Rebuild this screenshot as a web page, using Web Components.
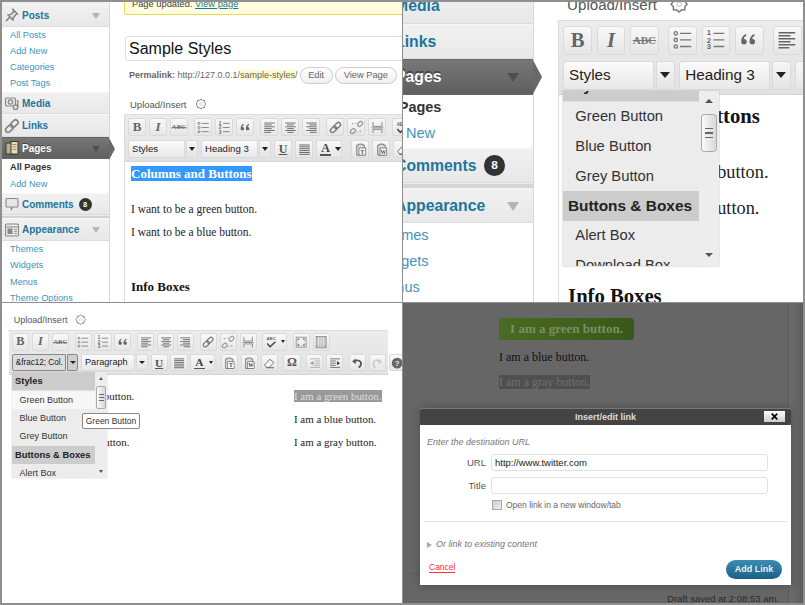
<!DOCTYPE html>
<html lang="en">
<head>
<meta charset="utf-8">
<title>Sample Styles</title>
<style>
  html,body{margin:0;padding:0;background:#8f8f8f;}
  body{width:805px;height:605px;overflow:hidden;font-family:"Liberation Sans",Arial,sans-serif;}
  #p2menu{zoom:1.575;margin:-98.300px 0 0 -25px;}
  #p2main{zoom:1.59;margin-left:15px;--pt:6px;}
  #p3main{zoom:.95;margin:0 0 0 6.400px;}
  #p3main wp-editor{border-left:0;padding-left:1px;}
  #dd2{position:absolute;left:160px;top:89px;zoom:1;--dz:1.64;--dh:106.500px;--crop:-12px;}
  #dd3{position:absolute;left:10px;top:69px;--dz:1;--dh:106px;--crop:0px;}
  #tip{position:absolute;left:80px;top:110px;}
  #dlg{position:absolute;left:17px;top:105px;}
</style>
</head>
<body>
<wp-collage>
  <wp-panel>
    <wp-menu></wp-menu>
    <wp-main>
      <wp-notice>Page updated. <a>View page</a></wp-notice>
      <wp-title>Sample Styles</wp-title>
      <wp-permalink></wp-permalink>
      <wp-upload></wp-upload>
      <wp-editor>
        <wp-toolbar slot="tb" row="b i abc | ul ol quote | al ac ar | link unlink more | spell"></wp-toolbar>
        <wp-toolbar slot="tb" row="sel:Styles sel:Heading_3 u just a+ | | pt pw eraser"></wp-toolbar>
        <wp-doc heading="sel"></wp-doc>
      </wp-editor>
    </wp-main>
  </wp-panel>

  <wp-panel>
    <wp-menu id="p2menu"></wp-menu>
    <wp-main id="p2main">
      <wp-upload style="margin-top:-5.500px"></wp-upload>
      <wp-editor>
        <wp-toolbar slot="tb" row="b i abc | ul ol quote | al ac ar"></wp-toolbar>
        <wp-toolbar slot="tb" row="sel:Styles sel:Heading_3 u just"></wp-toolbar>
        <wp-doc></wp-doc>
      </wp-editor>
    </wp-main>
    <wp-dropdown id="dd2"></wp-dropdown>
  </wp-panel>

  <wp-panel>
    <wp-main id="p3main">
      <wp-upload style="margin-top:11px"></wp-upload>
      <wp-editor>
        <wp-toolbar slot="tb" row="b i abc | ul ol quote | al ac ar | link unlink more | spell+ | full sink"></wp-toolbar>
        <wp-toolbar slot="tb" row="sel!:&amp;frac12;_Col. sel:Paragraph u just a+ | pt pw eraser | omega | out ind | undo redo help"></wp-toolbar>
        <wp-cols></wp-cols>
      </wp-editor>
    </wp-main>
    <wp-dropdown id="dd3" active></wp-dropdown>
    <wp-tip id="tip">Green Button</wp-tip>
  </wp-panel>

  <wp-panel>
    <wp-dimmed></wp-dimmed>
    <wp-link-dialog id="dlg"></wp-link-dialog>
  </wp-panel>
</wp-collage>

<script>
const G = '#777';
const esc = s => s.replace(/&/g,'&amp;').replace(/</g,'&lt;');
const lines = (rows) => rows.map(([a,b,y]) => `<path d="M${a} ${y}H${b}"/>`).join('');
const ICONS = {
  ul: `<g stroke="${G}" fill="none" stroke-width="1.1"><circle cx="4" cy="4.5" r="1.4"/><circle cx="4" cy="10" r="1.4"/><circle cx="4" cy="15.5" r="1.4"/><path d="M7.5 4.5H17M7.5 10H17M7.5 15.5H17"/></g>`,
  ol: `<g fill="#666" font-family="Liberation Sans" font-size="6.4" font-weight="700"><text x="2.4" y="6">1</text><text x="2.4" y="12.2">2</text><text x="2.4" y="18">3</text></g><path d="M8 4.5H17M8 10H17M8 15.5H17" stroke="${G}" stroke-width="1.1" fill="none"/>`,
  quote: `<g fill="#666"><path d="M3.5 11.5c0-3.4 1.7-5.6 4.2-6.5v1.6C6.5 7.3 5.8 8.2 5.7 9.3c1.4-.2 2.5.8 2.5 2.2 0 1.3-1 2.3-2.3 2.3-1.4 0-2.4-.9-2.4-2.3z"/><path d="M10.5 11.5c0-3.4 1.7-5.6 4.2-6.5v1.6c-1.2.7-1.9 1.6-2 2.7 1.4-.2 2.5.8 2.5 2.2 0 1.3-1 2.3-2.3 2.3-1.4 0-2.4-.9-2.4-2.3z"/></g>`,
  al: `<g stroke="#666" stroke-width="1.2" fill="none">${lines([[3,17,4],[3,13,6.5],[3,17,9],[3,13,11.5],[3,17,14],[3,12,16.5]])}</g>`,
  ac: `<g stroke="#666" stroke-width="1.2" fill="none">${lines([[3,17,4],[5.5,14.5,6.5],[3,17,9],[5.5,14.5,11.5],[3,17,14],[6,14,16.5]])}</g>`,
  ar: `<g stroke="#666" stroke-width="1.2" fill="none">${lines([[3,17,4],[7,17,6.5],[3,17,9],[7,17,11.5],[3,17,14],[8,17,16.5]])}</g>`,
  just: `<g stroke="#666" stroke-width="1.3" fill="none">${lines([[3,17,4],[3,17,6.5],[3,17,9],[3,17,11.5],[3,17,14],[3,17,16.5]])}</g>`,
  link: `<g transform="rotate(-45 10 10)" fill="none" stroke="${G}" stroke-width="1.8"><rect x="1.5" y="7.2" width="9.5" height="5.6" rx="2.8"/><rect x="9" y="7.2" width="9.5" height="5.6" rx="2.8"/></g>`,
  unlink: `<g fill="none" stroke="#999" stroke-width="1.7"><g transform="rotate(-45 10 10)"><rect x="-.5" y="7.5" width="7.5" height="5" rx="2.5"/><rect x="13" y="7.5" width="7.5" height="5" rx="2.5"/></g></g><g fill="#999"><circle cx="5" cy="5" r="1"/><circle cx="15" cy="15" r="1"/><circle cx="9" cy="4" r=".8"/><circle cx="11" cy="16" r=".8"/></g>`,
  more: `<g fill="none" stroke="${G}" stroke-width="1.1"><path d="M4 2.5V8.5H16V2.5"/><path d="M2 10.5H18"/><path d="M4 17.5V12.5H16V17.5"/></g>`,
  spell: `<text x="10" y="7.5" text-anchor="middle" font-family="Liberation Sans" font-weight="700" font-size="6" fill="#666">ABC</text><path d="M4.5 12l4 4.5 7.5-7" fill="none" stroke="#444" stroke-width="2"/>`,
  full: `<rect x="3" y="3" width="14" height="14" fill="none" stroke="${G}" stroke-width="1"/><g fill="#5c7a8a"><path d="M5 5h3.5L5 8.5zM15 5h-3.5L15 8.5zM5 15h3.5L5 11.5zM15 15h-3.5L15 11.5z"/></g>`,
  sink: `<rect x="3" y="2" width="14" height="16" fill="#bbb" stroke="${G}"/><g stroke="#eee" stroke-width=".9"><path d="M3 5.5H17M3 9H17M3 12.5H17M6.5 2V18M10 2V18M13.5 2V18"/></g>`,
  pt: `<path d="M5 4h2.5V2.8h5V4H15v13.5H5z" fill="#ddd" stroke="#666" stroke-width="1.1"/><rect x="8" y="8" width="9" height="9.5" fill="#fff" stroke="#666"/><text x="12.5" y="16" text-anchor="middle" font-family="Liberation Serif" font-weight="700" font-size="8" fill="#444">T</text>`,
  pw: `<path d="M5 4h2.5V2.8h5V4H15v13.5H5z" fill="#ddd" stroke="#666" stroke-width="1.1"/><rect x="8" y="8" width="9" height="9.5" fill="#fff" stroke="#666"/><text x="12.5" y="16" text-anchor="middle" font-family="Liberation Serif" font-weight="700" font-size="7.5" fill="#444">W</text>`,
  eraser: `<path d="M3.5 12.5L11 4.5l5.5 4.5-6 7H6z" fill="#f4f4f4" stroke="#666" stroke-width="1.2"/><path d="M6 16.5H17" stroke="#666" stroke-width="1.5"/>`,
  out: `<g stroke="#aaa" stroke-width="1.2" fill="none">${lines([[3,17,4],[9,17,7],[9,17,10],[9,17,13],[3,17,16]])}</g><path d="M7.5 7v6L3 10z" fill="#999"/>`,
  ind: `<g stroke="#666" stroke-width="1.2" fill="none">${lines([[3,17,4],[3,11,7],[3,11,10],[3,11,13],[3,17,16]])}</g><path d="M12.5 7v6L17 10z" fill="#444"/>`,
  undo: `<path d="M6 7.5c5-3 10-.5 9.5 4-.3 2.3-1.8 3.8-3.5 4.5" fill="none" stroke="#555" stroke-width="2.5"/><path d="M3 7.5L8 3.5v8z" fill="#555"/>`,
  redo: `<path d="M14 7.5c-5-3-10-.5-9.5 4 .3 2.3 1.8 3.8 3.5 4.5" fill="none" stroke="#ccc" stroke-width="2.5"/><path d="M17 7.5L12 3.5v8z" fill="#ccc"/>`,
  help: `<circle cx="10" cy="10" r="7.5" fill="#666"/><text x="10" y="14" text-anchor="middle" font-family="Liberation Sans" font-weight="700" font-size="11" fill="#eee">?</text>`
};
const TEXT_TOOLS = {
  b:`<span style="font:700 13px 'Liberation Serif';color:#666">B</span>`,
  i:`<span style="font:italic 700 13px 'Liberation Serif';color:#666">I</span>`,
  abc:`<span style="font:700 7px 'Liberation Serif';color:#777;text-decoration:line-through">ABC</span>`,
  u:`<span style="font:700 12px 'Liberation Serif';color:#555;text-decoration:underline">U</span>`,
  a:`<span style="font:700 12px/11px 'Liberation Serif';color:#444;border-bottom:2px solid #555;padding:0 1px">A</span>`,
  omega:`<span style="font:700 13px 'Liberation Serif';color:#555">Ω</span>`
};

function define(name, css, html){
  customElements.define(name, class extends HTMLElement{
    constructor(){
      super();
      this.attachShadow({mode:'open'});
    }
    connectedCallback(){
      if(this.shadowRoot.childNodes.length) return;
      this.shadowRoot.innerHTML = `<style>${css}</style>${typeof html==='function'?html(this):html}`;
    }
  });
}

define('wp-collage', `:host{display:grid;grid-template-columns:400px 400px;grid-template-rows:300px 300px;gap:1px;padding:2px;width:805px;height:605px;box-sizing:border-box;background:#8f8f8f;}`, `<slot></slot>`);

define('wp-panel', `:host{display:flex;position:relative;overflow:hidden;background:#fff;width:400px;height:300px;font-family:"Liberation Sans",sans-serif;}`, `<slot></slot>`);

define('wp-main', `:host{display:block;flex:none;width:400px;margin-left:14px;}`, `<slot></slot>`);

define('wp-notice', `:host{display:block;margin-top:-8px;height:21px;box-sizing:border-box;background:#ffffe0;border:1px solid #e6db55;border-radius:2px;padding:4px 0 0 7px;font-size:9.3px;color:#444;line-height:11px;white-space:nowrap;}
  ::slotted(a){color:#21759b;text-decoration:underline;}`, `<slot></slot>`);

define('wp-title', `:host{display:block;margin:21px 0 0 1px;height:25px;width:330px;box-sizing:border-box;border:1px solid #dfdfdf;border-radius:3px;padding:0 3px;font-size:16px;line-height:23px;color:#111;}`, `<slot></slot>`);

define('wp-permalink', `:host{display:flex;align-items:center;gap:2px;margin:6px 0 0 5px;height:16px;font-size:9px;color:#666;white-space:nowrap;}
  mark{background:#fffbcc;color:#666;}
  b{font-weight:700;}
  span.btn{display:inline-block;height:17px;line-height:15px;box-sizing:border-box;border:1px solid #ccc;border-radius:9px;padding:0 7.5px;background:linear-gradient(#fff,#f0f0f0);font-size:9.3px;color:#666;}`,
  `<span><b>Permalink:</b> http://127.0.0.1/<mark>sample-styles</mark>/</span><span class="btn">Edit</span><span class="btn" style="padding:0 8px">View Page</span>`);

const star = (() => { let p=''; for(let i=0;i<16;i++){const a=i*Math.PI/8, r=i%2?5.7:7.2; p+=(10+r*Math.cos(a)).toFixed(2)+','+(10+r*Math.sin(a)).toFixed(2)+' ';} return p; })();
define('wp-upload', `:host{display:flex;align-items:center;height:17px;box-sizing:border-box;padding:0 0 3px 6px;margin-top:14px;font-size:9.5px;color:#555;white-space:nowrap;}
  svg{width:14px;height:14px;margin-left:7px;flex:none;}`,
  `<span>Upload/Insert</span><svg viewBox="0 0 20 20" aria-hidden="true"><polygon points="${star}" fill="none" stroke="#777" stroke-width="1.3"/><circle cx="10" cy="10" r="2" fill="none" stroke="#ccc"/></svg>`);

define('wp-editor', `:host{display:block;width:400px;border:1px solid #dcdcdc;border-width:1px 0 0 1px;box-sizing:border-box;background:#fff;}
  .bars{display:flex;flex-direction:column;gap:4px;padding:3px;background:linear-gradient(#ececec,#e2e2e2);border-bottom:1px solid #d5d5d5;}`,
  `<div class="bars"><slot name="tb"></slot></div><slot></slot>`);

define('wp-tool', `:host{display:inline-flex;align-items:center;justify-content:center;flex:none;width:18px;height:18px;box-sizing:border-box;border:1px solid #dadada;border-radius:2px;background:linear-gradient(#f8f8f8,#e6e6e6);overflow:hidden;}
  :host([split]){width:26px;justify-content:flex-start;padding-left:1px;}
  svg{width:15px;height:15px;flex:none;}
  .inner{display:inline-flex;align-items:center;justify-content:center;width:15px;flex:none;line-height:1;}
  i{display:block;flex:none;margin-left:2px;width:0;height:0;border:3px solid transparent;border-top:4px solid #222;border-bottom:0;}`,
  (el)=>{
    const name = el.getAttribute('name');
    const arrow = el.hasAttribute('split') ? '<i></i>' : '';
    if (TEXT_TOOLS[name]) return `<span class="inner">${TEXT_TOOLS[name]}</span>${arrow}`;
    return `<svg viewBox="0 0 20 20" aria-hidden="true">${ICONS[name]||''}</svg>${arrow}`;
  });

define('wp-select', `:host{display:flex;flex:none;width:70px;height:18px;gap:1px;font-size:9.6px;color:#222;}
  .lab{flex:1;min-width:0;box-sizing:border-box;border:1px solid #dadada;border-radius:2px 0 0 2px;background:linear-gradient(#fbfbfb,#e8e8e8);line-height:16px;padding-left:3px;white-space:nowrap;overflow:hidden;}
  .arr{flex:none;width:12px;box-sizing:border-box;border:1px solid #dadada;border-radius:0 2px 2px 0;background:linear-gradient(#f6f6f6,#e4e4e4);display:flex;align-items:center;justify-content:center;}
  i{display:block;width:0;height:0;border:3.5px solid transparent;border-top:4px solid #222;border-bottom:0;}
  :host([open]){font-size:8.6px;}
  :host([open]) .lab{border-color:#888;background:#dcdcdc;}
  :host([open]) .arr{border-color:#888;background:#cfcfcf;}`,
  (el)=>`<div class="lab">${esc(el.getAttribute('label'))}</div><div class="arr"><i></i></div>`);

define('wp-toolbar', `:host{display:flex;align-items:center;gap:3px;height:18px;white-space:nowrap;}
  .sp{display:block;flex:none;width:0;height:1px;}
  wp-select:first-child{margin-left:1px;}`,
  (el)=>el.getAttribute('row').split(' ').map(t=>{
    if(t==='|') return '<span class="sp"></span>';
    if(t.startsWith('sel:')) return `<wp-select label="${t.slice(4).replace(/_/g,' ')}"></wp-select>`;
    if(t.startsWith('sel!:')) return `<wp-select open label="${esc(t.slice(5).replace(/_/g,' '))}"></wp-select>`;
    if(t.endsWith('+')) return `<wp-tool name="${t.slice(0,-1)}" split></wp-tool>`;
    return `<wp-tool name="${t}"></wp-tool>`;
  }).join(''));

define('wp-doc', `:host{display:block;font-family:"Liberation Serif",serif;font-size:11.5px;color:#222;padding:var(--pt,4.5px) 0 0 6px;height:200px;background:#fff;}
  p{margin:0;line-height:14px;white-space:nowrap;}
  h3{margin:0;font-size:13px;line-height:14px;font-weight:700;color:#111;white-space:nowrap;}
  h3 span.sel{background:#39f;color:#fff;}`, (el)=>`
  <h3>${el.getAttribute('heading')?'<span class="sel">Columns and Buttons</span>':'Columns and Buttons'}</h3>
  <p style="margin-top:21px">I want to be a green button.</p>
  <p style="margin-top:9px">I want to be a blue button.</p>
  <h3 style="margin-top:41px">Info Boxes</h3>`);

define('wp-cols', `:host{display:grid;grid-template-columns:294px 1fr;row-gap:10.5px;padding:15px 0 0 6px;height:200px;font-family:"Liberation Serif",serif;font-size:11.5px;color:#222;align-content:start;background:#fff;}
  p{margin:0;line-height:14px;white-space:nowrap;}
  .sel{background:#999;color:#ddd;}`,
  `<p>I want to be a green button.</p><p><span class="sel">I am a green button.</span></p>
   <p>I want to be a blue button.</p><p>I am a blue button.</p>
   <p>I want to be a gray button.</p><p>I am a gray button.</p>`);

const MICONS = {
  pin:`<g fill="none" stroke="#777" stroke-width="1.2"><path d="M9 2.5l4.5 4.5-1.5.5-2.5 3-.5 2.5-5-5 2.5-.5 3-2.5z" fill="#ddd"/><path d="M5.5 10.5L2 14" stroke-width="1.5"/></g>`,
  media:`<g fill="none" stroke="#888" stroke-width="1.2"><rect x="1.5" y="3" width="10" height="8" rx="1" fill="#e4e4e4"/><circle cx="6.5" cy="7" r="2.2"/><circle cx="11.5" cy="12.2" r="2.3" fill="#ddd"/><path d="M13.8 12V5" stroke="#777"/></g>`,
  links:`<g transform="rotate(-45 8 8)" fill="none" stroke="#888" stroke-width="1.8"><rect x="0" y="5.5" width="8.5" height="5" rx="2.5"/><rect x="7" y="5.5" width="8.5" height="5" rx="2.5"/></g>`,
  pages:`<rect x="2" y="3" width="6.5" height="11" fill="#b9b08c" stroke="#3d3a2c"/><rect x="7" y="1.5" width="7" height="12.5" fill="#eadfb6" stroke="#3d3a2c"/><path d="M8.5 4.5h4M8.5 7h4M8.5 9.5h4" stroke="#9a8f6a"/>`,
  comments:`<path d="M3 2.5h10a1 1 0 0 1 1 1v6.5a1 1 0 0 1-1 1H8.5l-1 2.5-.8-2.5H3a1 1 0 0 1-1-1V3.5a1 1 0 0 1 1-1z" fill="#e6e6e6" stroke="#888" stroke-width="1.1"/>`,
  appearance:`<rect x="1.5" y="2" width="13" height="12" rx="1" fill="#e8e8e8" stroke="#888" stroke-width="1.1"/><path d="M1.5 5H14.5" stroke="#888"/><rect x="3.5" y="6.5" width="5" height="5.5" fill="#888"/><path d="M10 7.5h3M10 9.5h3M10 11.5h3" stroke="#999"/>`
};
define('wp-menu-group', `:host{display:block;}
  .h{position:relative;display:flex;align-items:center;height:22.5px;box-sizing:border-box;background:linear-gradient(#f1f1f1,#e8e8e8);border-top:1px solid #f7f7f7;border-bottom:1px solid #dcdcdc;font-weight:700;font-size:10px;color:#21759b;white-space:nowrap;}
  .ic{width:16px;height:16px;flex:none;margin:0 2px;}
  .tri{position:absolute;right:9px;top:8px;width:0;height:0;border:4px solid transparent;border-top:6px solid #b4b4b4;border-bottom:0;}
  .badge{display:inline-block;margin-left:5px;width:13px;height:13px;border-radius:50%;background:#333;color:#fff;text-align:center;font-size:7.5px;line-height:13px;font-weight:700;}
  :host([current]) .h{background:linear-gradient(#777,#5f5f5f);color:#fff;border-color:#666;text-shadow:0 -1px 0 #444;}
  :host([current]) .h::after{content:"";position:absolute;right:-6px;top:0;width:0;height:0;border-style:solid;border-width:11.25px 0 11.25px 6px;border-color:transparent transparent transparent #696969;}
  :host([current]) .tri{border-top-color:#4f4f4f;}
  ul{list-style:none;margin:0;padding:0;background:#fff;}
  li{height:16.33px;line-height:16.33px;font-size:9.2px;color:#4195bb;padding-left:8px;white-space:nowrap;}
  li.on{font-weight:700;color:#333;}`,
  (el)=>{
    const items=(el.getAttribute('items')||'').split('|').filter(Boolean);
    const cnt=el.getAttribute('count');
    return `<div class="h"><svg class="ic" viewBox="0 0 16 16" aria-hidden="true">${MICONS[el.getAttribute('icon')]}</svg><span>${el.getAttribute('label')}</span>${cnt?`<span class="badge">${cnt}</span>`:''}${el.hasAttribute('open')||el.hasAttribute('current')?'<span class="tri"></span>':''}</div>`+
      (items.length?`<ul>${items.map(t=>t.startsWith('*')?`<li class="on">${t.slice(1)}</li>`:`<li>${t}</li>`).join('')}</ul>`:'');
  });
define('wp-menu', `:host{display:block;flex:none;width:108px;height:330px;background:#fff;border-top:2px solid #efefef;border-right:1px solid #d8d8d8;box-sizing:border-box;box-shadow:inset -5px 0 5px -4px #e8e8e8;}
  .sep{height:3px;background:#d4d4d4;border-top:1px solid #ececec;box-sizing:border-box;}
  .gap{height:1px;}`,
  `<wp-menu-group icon="pin" label="Posts" open items="All Posts|Add New|Categories|Post Tags"></wp-menu-group>
   <wp-menu-group icon="media" label="Media"></wp-menu-group>
   <wp-menu-group icon="links" label="Links"></wp-menu-group>
   <wp-menu-group icon="pages" label="Pages" current items="*All Pages|Add New"></wp-menu-group>
   <div class="gap"></div>
   <wp-menu-group icon="comments" label="Comments" count="8"></wp-menu-group>
   <div class="sep"></div>
   <wp-menu-group icon="appearance" label="Appearance" open items="Themes|Widgets|Menus|Theme Options"></wp-menu-group>`);

define('wp-dropdown', `:host{display:flex;height:calc(var(--dh) * var(--dz));width:calc(95px * var(--dz));}
  .wrap{display:flex;zoom:var(--dz);width:95px;height:var(--dh);background:#ececec;overflow:hidden;box-shadow:0 0 1px #aaa;}
  .list{flex:1;min-width:0;overflow:hidden;}
  .in{margin-top:var(--crop);}
  .hd{height:18px;line-height:18px;background:#ccc;font-weight:700;font-size:9.4px;color:#222;padding-left:3px;white-space:nowrap;}
  .hd.f{border-bottom:1px solid #ddd;}
  .it{height:18.2px;line-height:18.2px;font-size:9px;color:#333;padding-left:7.5px;white-space:nowrap;background:#ececec;}
  .it.on{background:#f7f7f7;}
  .bar{flex:none;width:12px;background:#ededed;position:relative;}
  .up,.dn{position:absolute;left:3.5px;width:0;height:0;border:2.5px solid transparent;}
  .up{top:5px;border-bottom:3px solid #555;border-top:0;}
  .dn{bottom:5px;border-top:3px solid #555;border-bottom:0;}
  .th{position:absolute;top:14px;left:1px;width:10px;height:23px;box-sizing:border-box;border:1px solid #aaa;border-radius:2px;background:linear-gradient(90deg,#fafafa,#d8d8d8);display:flex;align-items:center;justify-content:center;}
  .th i{display:block;width:5px;height:5px;border-top:1px solid #666;border-bottom:1px solid #666;position:relative;}
  .th i::after{content:"";position:absolute;left:0;right:0;top:2px;height:1px;background:#666;}`,
  (el)=>`<div class="wrap"><div class="list"><div class="in">
    <div class="hd f">Styles</div>
    <div class="it ${el.hasAttribute('active')?'on':''}">Green Button</div>
    <div class="it">Blue Button</div>
    <div class="it">Grey Button</div>
    <div class="hd">Buttons &amp; Boxes</div>
    <div class="it">Alert Box</div>
    <div class="it">Download Box</div>
  </div></div><div class="bar"><span class="up"></span><span class="th"><i></i></span><span class="dn"></span></div></div>`);

define('wp-tip', `:host{display:block;box-sizing:border-box;width:58px;height:16px;border:1px solid #888;border-radius:2px;background:#fff;font-size:8.5px;line-height:14px;text-align:center;color:#333;white-space:nowrap;}`, `<slot></slot>`);

define('wp-dimmed', `:host{display:flex;width:400px;height:300px;background:#666;}
  .m{width:386px;flex:none;position:relative;border-right:1px solid #5b5b5b;box-sizing:border-box;padding:15px 0 0 96px;font-family:"Liberation Serif",serif;font-size:12px;}
  .r{flex:1;background:linear-gradient(90deg,#6c6c6c,#5e5e5e);}
  .g{display:inline-block;box-sizing:border-box;width:135px;height:22px;line-height:21px;border-radius:3px;background:linear-gradient(90deg,#496b22,#3a5818);color:#7d8e66;font-weight:700;font-size:13px;text-align:center;white-space:nowrap;}
  p{margin:10px 0 0;color:#111;line-height:14px;white-space:nowrap;}
  .s{background:#4f4f4f;color:#707070;}
  .foot{position:absolute;left:0;right:0;top:270px;height:29px;border-top:1px solid #5e5e5e;box-sizing:border-box;font-family:"Liberation Sans",sans-serif;font-size:9.5px;color:#2c2c2c;text-align:right;padding:19px 9px 0 0;line-height:11px;white-space:nowrap;}`,
  `<div class="m"><div class="g">I am a green button.</div><p>I am a blue button.</p><p style="margin-top:11px"><span class="s">I am a gray button.</span></p><div class="foot">Draft saved at 2:08:53 am.</div></div><div class="r"></div>`);

define('wp-link-dialog', `:host{display:block;width:371px;height:177px;box-sizing:border-box;background:#fff;box-shadow:0 0 10px rgba(0,0,0,.25);border-radius:3px 3px 0 0;font-size:9px;color:#666;overflow:hidden;}
  .t{position:relative;display:flex;align-items:center;justify-content:center;height:17px;background:#444;border-top:1px solid #777;box-sizing:border-box;color:#ddd;font-weight:700;font-size:9px;}
  .x{position:absolute;right:6px;top:2px;width:21px;height:11px;background:linear-gradient(#fff,#ccc);display:flex;align-items:center;justify-content:center;}
  .x svg{width:7px;height:7px;}
  .b{padding:0 7px;}
  .dest{font-style:italic;margin-top:12px;line-height:11px;font-size:9px;color:#777;}
  .row{display:flex;align-items:center;margin-top:6px;}
  .row label{width:59px;text-align:right;font-size:9.5px;color:#555;flex:none;}
  .inp{margin-left:5px;width:277px;height:17px;line-height:15px;box-sizing:border-box;border:1px solid #e2e2e2;border-radius:3px;padding-left:3px;font-size:9.5px;color:#222;flex:none;}
  .chk{display:flex;align-items:center;margin:6px 0 0 65px;font-size:8.5px;color:#666;white-space:nowrap;}
  .chk i{display:block;width:10px;height:10px;box-sizing:border-box;border:1px solid #aaa;background:linear-gradient(135deg,#ccc,#eee);margin-right:4px;}
  hr{border:0;border-top:1px solid #e2e2e2;margin:11px -3px 0;height:0;}
  .more{display:flex;align-items:center;margin-top:17px;font-style:italic;font-size:9px;color:#777;white-space:nowrap;line-height:11px;}
  .more i{display:block;width:0;height:0;border:3px solid transparent;border-left:5px solid #aaa;border-right:0;margin-right:4px;}
  .foot{display:flex;align-items:center;justify-content:space-between;margin-top:10px;}
  .c{color:#f33;font-size:8.5px;border-bottom:1px solid #f33;margin:0 0 3px 2px;line-height:9px;}
  .a{display:block;width:56px;height:19px;line-height:19px;border-radius:10px;background:linear-gradient(#3b8db3,#1a5f85);color:#e8f2f7;font-weight:700;font-size:9px;text-align:center;margin-right:2px;}`,
  `<div class="t"><span>Insert/edit link</span><span class="x"><svg viewBox="0 0 10 10" aria-hidden="true"><path d="M1 1L9 9M9 1L1 9" stroke="#000" stroke-width="2.4"/></svg></span></div>
   <div class="b">
     <div class="dest">Enter the destination URL</div>
     <div class="row"><label>URL</label><div class="inp">http://www.twitter.com</div></div>
     <div class="row"><label>Title</label><div class="inp"></div></div>
     <div class="chk"><i></i><span>Open link in a new window/tab</span></div>
     <hr>
     <div class="more"><i></i><span>Or link to existing content</span></div>
     <div class="foot"><span class="c">Cancel</span><span class="a">Add Link</span></div>
   </div>`);
</script>
</body>
</html>
